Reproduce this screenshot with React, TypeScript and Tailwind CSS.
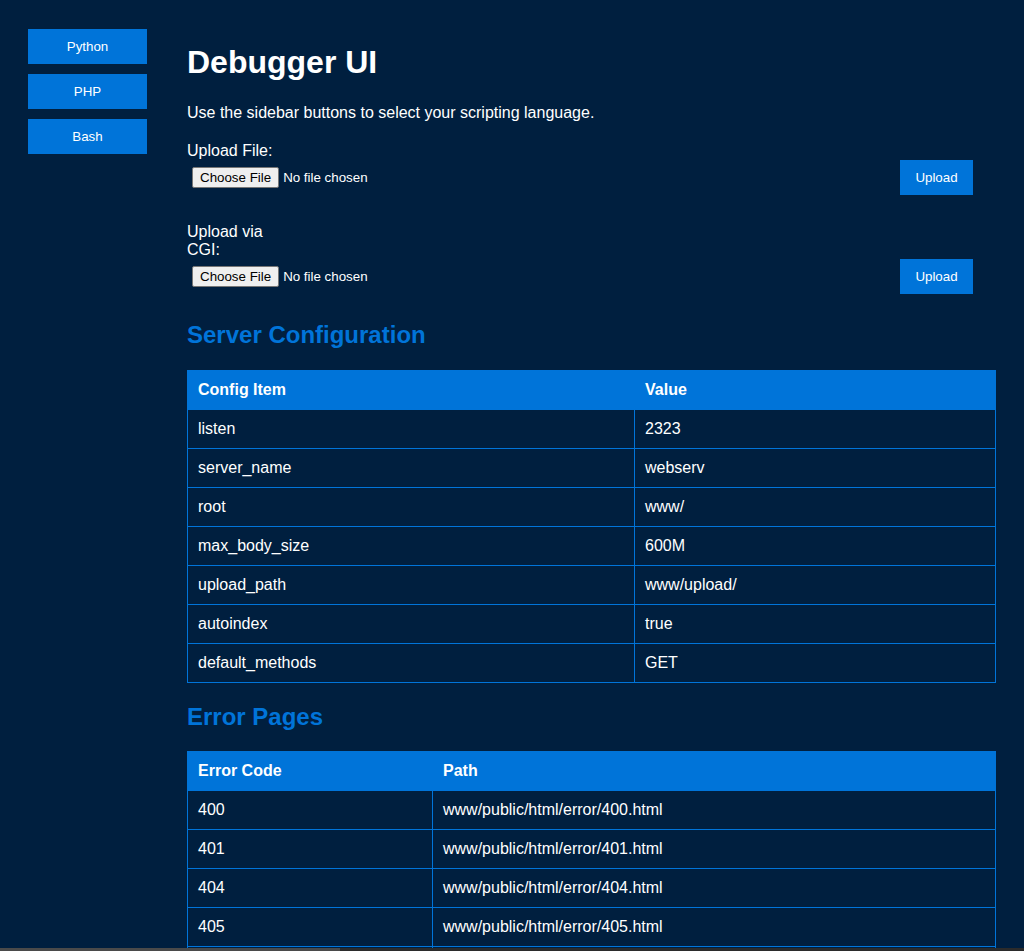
const config = [
  ["listen", "2323"],
  ["server_name", "webserv"],
  ["root", "www/"],
  ["max_body_size", "600M"],
  ["upload_path", "www/upload/"],
  ["autoindex", "true"],
  ["default_methods", "GET"],
];

const errors = [
  ["400", "www/public/html/error/400.html"],
  ["401", "www/public/html/error/401.html"],
  ["404", "www/public/html/error/404.html"],
  ["405", "www/public/html/error/405.html"],
  ["413", "www/public/html/error/413.html"],
  ["500", "www/public/html/error/500.html"],
];

function FakeFileInput() {
  return (
    <div className="ml-[5px] flex items-center text-[13.33px] leading-[15px]">
      <span className="flex h-[21px] items-center rounded-[2px] border border-[#767676] bg-[#efefef] px-[7px] text-black">
        Choose File
      </span>
      <span className="ml-[4px] text-white">No file chosen</span>
    </div>
  );
}

function UploadForm({ label, wrap }: { label: string; wrap?: boolean }) {
  return (
    <div>
      <div className={wrap ? "w-[80px] leading-[18px]" : "leading-[18px]"}>{label}</div>
      <div className="flex h-[35px] items-center justify-between">
        <FakeFileInput />
        <button className="mr-[23px] h-[35px] w-[73px] bg-[#0074d9] text-[13.33px] text-white">
          Upload
        </button>
      </div>
    </div>
  );
}

function DataTable({ head, rows, firstCol }: { head: string[]; rows: string[][]; firstCol: string }) {
  return (
    <table className="w-[809px] table-fixed border-collapse">
      <colgroup>
        <col className={firstCol} />
        <col />
      </colgroup>
      <thead>
        <tr className="bg-[#0074d9]">
          {head.map((h) => (
            <th key={h} className="border border-[#0074d9] px-[10px] py-[10px] text-left font-bold leading-[18px]">
              {h}
            </th>
          ))}
        </tr>
      </thead>
      <tbody>
        {rows.map((r) => (
          <tr key={r[0]}>
            <td className="border border-[#0074d9] px-[10px] py-[10px] leading-[18px]">{r[0]}</td>
            <td className="border border-[#0074d9] px-[10px] py-[10px] leading-[18px]">{r[1]}</td>
          </tr>
        ))}
      </tbody>
    </table>
  );
}

export default function App() {
  return (
    <div className="flex min-h-screen bg-[#001f3f] font-['Liberation_Sans',Arial,sans-serif] text-base text-white">
      {/* sidebar */}
      <div className="flex w-[147px] shrink-0 flex-col gap-[10px] pl-[28px] pt-[29px]">
        {["Python", "PHP", "Bash"].map((l) => (
          <button key={l} className="h-[35px] w-[119px] bg-[#0074d9] text-[13.33px] text-white">
            {l}
          </button>
        ))}
      </div>

      {/* main */}
      <div className="flex-1 pb-[40px] pl-[40px] pr-[28px] pt-[44px]">
        <h1 className="text-[32px] font-bold leading-[37px]">Debugger UI</h1>
        <p className="mt-[23px] leading-[18px]">Use the sidebar buttons to select your scripting language.</p>

        <div className="mt-[20px]">
          <UploadForm label="Upload File:" />
        </div>
        <div className="mt-[28px]">
          <UploadForm label="Upload via CGI:" wrap />
        </div>

        <h2 className="mt-[27px] text-[24px] font-bold leading-[28px] text-[#0074d9]">Server Configuration</h2>
        <div className="mt-[21px]">
          <DataTable head={["Config Item", "Value"]} rows={config} firstCol="w-[447px]" />
        </div>

        <h2 className="mt-[20px] text-[24px] font-bold leading-[28px] text-[#0074d9]">Error Pages</h2>
        <div className="mt-[20px]">
          <DataTable head={["Error Code", "Path"]} rows={errors} firstCol="w-[245px]" />
        </div>
      </div>

      <div className="fixed inset-x-0 bottom-0 flex h-[3px]">
        <div className="w-[340px] bg-[#4a4a4a]" />
        <div className="flex-1 bg-[#2b2b2b]" />
      </div>
    </div>
  );
}
